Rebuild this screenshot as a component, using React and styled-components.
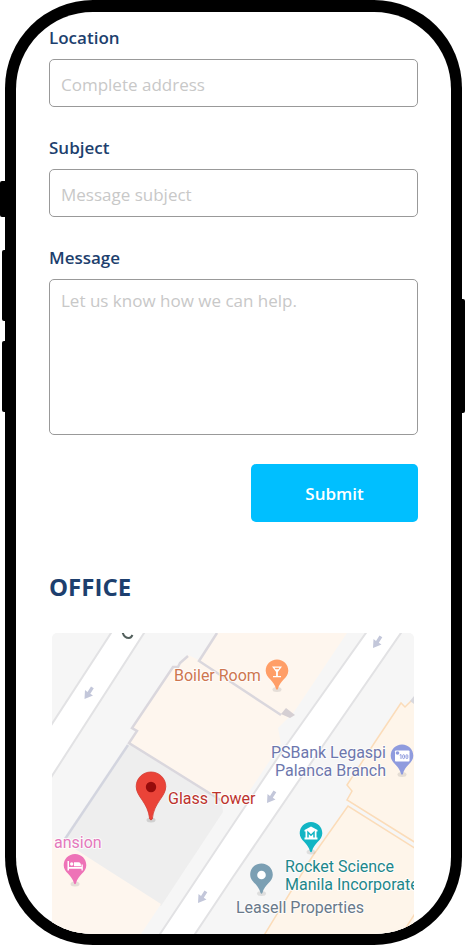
import React from "react";
import styled, { createGlobalStyle } from "styled-components";

const GlobalStyle = createGlobalStyle`
  *, *::before, *::after { box-sizing: border-box; }
  body { margin: 0; background: #fff; }
`;

const navy = "#1d3f6e";

const Stage = styled.div`
  display: flex;
  height: 100vh;
  padding: 0 4px 1px 5px;
  font-family: "Open Sans", sans-serif;
`;

const Device = styled.div`
  position: relative;
  flex: 1;
  display: flex;
  padding: 12px 11px 11px;
  border-radius: 88px;
  background: #000;
`;

const SideKey = styled.span`
  position: absolute;
  top: ${(p) => p.$top}px;
  ${(p) => p.$side}: -${(p) => p.$depth}px;
  width: 8px;
  height: ${(p) => p.$length}px;
  border-radius: 2px;
  background: #000;
`;

const Screen = styled.main`
  position: relative;
  flex: 1;
  min-width: 0;
  overflow: hidden;
  padding: 14px 33px 0;
  border-radius: 77px;
  background: #fff;
`;

const ContactForm = styled.form`
  display: flex;
  flex-direction: column;
  gap: 29px;
`;

const Field = styled.div`
  display: flex;
  flex-direction: column;
  gap: 9px;
`;

const Label = styled.label`
  color: ${navy};
  font-size: 17px;
  font-weight: 600;
  line-height: 24px;
`;

const control = `
  display: block;
  width: 100%;
  margin: 0;
  border: 1px solid #999;
  border-radius: 5px;
  background: #fff;
  color: ${navy};
  font: 400 17px/24px "Open Sans", sans-serif;
  outline-color: #00bfff;
  &::placeholder { color: #c8c8c8; opacity: 1; }
`;

const TextInput = styled.input`
  ${control}
  height: 48px;
  padding: 2px 11px 0;
`;

const TextArea = styled.textarea`
  ${control}
  height: 156px;
  padding: 9px 11px;
  resize: none;
`;

const SubmitButton = styled.button`
  align-self: flex-end;
  width: 167px;
  height: 58px;
  padding: 2px 0 0;
  border: 0;
  border-radius: 5px;
  background: #00bfff;
  color: #fff;
  font: 600 17px/24px "Open Sans", sans-serif;
  cursor: pointer;
`;

const OfficeTitle = styled.h2`
  margin: 49px 0 30px;
  color: ${navy};
  font-size: 24px;
  font-weight: 700;
  line-height: 32px;
`;

const MapFrame = styled.div`
  margin: 0 4px 0 3px;
  overflow: hidden;
  border-radius: 5px;
`;

const MapDrawing = styled.svg`
  display: block;
  width: 100%;
  height: auto;
`;

const PlaceName = styled.text`
  fill: ${(p) => p.$color};
  font-family: Roboto, sans-serif;
  font-size: 16px;
  paint-order: stroke;
  stroke: rgba(255, 255, 255, 0.8);
  stroke-width: 2px;
  stroke-linejoin: round;
`;

function Arrow({ x, y }) {
  return (
    <g transform={`translate(${x} ${y})`} fill="#c3c7da">
      <path d="M0 0 L0.5 -9 L3 -7 L6.5 -12.5 L9.3 -10.7 L5.8 -5.2 L8.5 -3.5 Z" />
    </g>
  );
}

function Pin({ x, y, color, children }) {
  return (
    <g transform={`translate(${x} ${y})`}>
      <ellipse cx="0" cy="18.500" rx="4.500" ry="2.500" fill="#777" opacity=".18" />
      <path
        d="M0 -11.500 C6.500 -11.500 11.300 -6.500 11.300 -.3 C11.300 7 3 9 .9 18 Q0 19.500 -.9 18 C-3 9 -11.300 7 -11.300 -.3 C-11.300 -6.500 -6.500 -11.500 0 -11.500 Z"
        fill={color}
      />
      {children}
    </g>
  );
}

function OfficeMap() {
  return (
    <MapDrawing viewBox="52 633 362 301" role="img" aria-label="Map of the area around Glass Tower">
      <rect x="52" y="633" width="362" height="301" fill="#f6f6f6" />

      {/* roads */}
      <g fill="#fff" stroke="#e2e2e4" strokeWidth="2">
        <path d="M113 630 L50 727 V779 L146 630 Z" />
        <path d="M368 630 L285 747 L230 829 L158 937 H193 L233 877 L313 760 L403 630 Z" />
      </g>
      <path d="M122.500 632 Q124 638 129 638 Q131 638 132.500 635" fill="none" stroke="#53605d" strokeWidth="2" />

      {/* buildings */}
      <path d="M218 633 H347 L294 712 L278 728 L281 744 L240 805 L222 802 L129 743 L137 731 L131 729 L173 666 L178 665 L188 655 L199 660 Z" fill="#fef6ee" />
      <path d="M128 744 L222 802 L223 812 L161 906 L75 849 L64 840 Z" fill="#eee" />
      <path d="M52 838 L75 849 L161 904 L141 934 H52 Z" fill="#fef6ee" />
      <g fill="none" stroke="#dad7dd" strokeWidth="2.500">
        <path d="M217 633 L199 661 L281 715" />
        <path d="M188 656 L180 663 L178 667 L173 667 L132 728 L137 731 L129 743 L222 801" />
        <path d="M128 745 L65 839" stroke="#d3d5df" />
      </g>
      <path d="M286 708 L295 715 L290 718 L281 714 Z" fill="#d5cfd3" />

      <g fill="#fef5ea" stroke="#fbdcb9" strokeWidth="1.500">
        <path d="M416 698 L411 701 L405 707 L401 703 L375 742 L347 785 L352 791 L347 800 L416 843 Z" />
        <path d="M416 849 L348 806 L312 857 L263 937 H416 Z" />
        <path d="M416 912 L400 937" />
      </g>
      <path d="M414 696 L410 701 L414 704 Z" fill="#d8d8de" />

      <Arrow x={84.5} y={699} />
      <Arrow x={373} y={648} />
      <Arrow x={267} y={803} />
      <Arrow x={198} y={903} />

      {/* cocktail bar */}
      <Pin x={277} y={671} color="#ff9e67">
        <path d="M-5 -4.500 H5 L.9 1 V5 H4 V6.200 H-4 V5 H-.9 V1 Z" fill="#fff" />
        <path d="M-2.500 -3.200 H2.500 L1.500 -1.800 H-1.500 Z" fill="#ff9e67" />
      </Pin>

      {/* bank */}
      <Pin x={402} y={756} color="#8f9bde">
        <rect x="-7" y="-5.500" width="14.500" height="11" rx=".8" fill="#fff" />
        <circle cx="-4.500" cy="-3" r="1.800" fill="#8f9bde" />
        <g fill="none" stroke="#8f9bde" strokeWidth="1">
          <path d="M-2.300 -.8 L-1 -1.500 V3" />
          <rect x=".7" y="-1.300" width="1.800" height="3.900" rx=".9" />
          <rect x="4" y="-1.300" width="1.800" height="3.900" rx=".9" />
        </g>
      </Pin>

      {/* museum */}
      <Pin x={311} y={833.5} color="#12b5c4">
        <path d="M0 -7 L6.500 -3.500 V-2 H5.500 V4 H6.500 V6 H-6.500 V4 H-5.500 V-2 H-6.500 V-3.500 Z" fill="#fff" />
        <path d="M-3 4 V-1.300 L0 1.700 L3 -1.300 V4" fill="none" stroke="#12b5c4" strokeWidth="1.500" />
      </Pin>

      {/* unlabelled business */}
      <Pin x={261.5} y={875} color="#7b9fb3">
        <circle r="4.300" fill="#fff" />
      </Pin>

      {/* hotel */}
      <Pin x={75} y={865.5} color="#ee73b7">
        <path d="M-7.500 -4.500 H-6 V1.500 H6.500 V-1 H7.800 V5 H6.500 V3.200 H-6 V5 H-7.500 Z" fill="#fff" />
        <circle cx="-3.300" cy="-1.500" r="1.700" fill="#fff" />
        <path d="M-1 .7 V-3.200 H3.500 Q6 -3 6 .7 Z" fill="#fff" />
      </Pin>

      {/* office */}
      <ellipse cx="151" cy="820" rx="4.500" ry="2.500" fill="#777" opacity=".25" />
      <path d="M151 772 C159.500 772 165.800 778.500 165.800 786.500 C165.800 797 154 802 152.300 819 Q151 821 149.700 819 C148 802 136.200 797 136.200 786.500 C136.200 778.500 142.500 772 151 772 Z" fill="#ea4338" stroke="#d43a31" strokeWidth=".8" />
      <circle cx="151" cy="787" r="5.200" fill="#960b0b" />

      <PlaceName x="174" y="681" $color="#ce764f">Boiler Room</PlaceName>
      <PlaceName x="386" y="758" textAnchor="end" $color="#6d77ad">PSBank Legaspi</PlaceName>
      <PlaceName x="386" y="776" textAnchor="end" $color="#6d77ad">Palanca Branch</PlaceName>
      <PlaceName x="168" y="804" $color="#bd332d">Glass Tower</PlaceName>
      <PlaceName x="54" y="848" $color="#e578bb">ansion</PlaceName>
      <PlaceName x="285" y="872" $color="#1d878b">Rocket Science</PlaceName>
      <PlaceName x="285" y="890" $color="#1d878b">Manila Incorporated</PlaceName>
      <PlaceName x="236" y="913" $color="#69798a">Leasell Properties</PlaceName>
    </MapDrawing>
  );
}

export default function App() {
  return (
    <>
      <GlobalStyle />
      <Stage>
        <Device>
          <SideKey $side="left" $depth={5} $top={181} $length={36} />
          <SideKey $side="left" $depth={3} $top={250} $length={71} />
          <SideKey $side="left" $depth={3} $top={341} $length={71} />
          <SideKey $side="right" $depth={3} $top={299} $length={114} />
          <Screen>
            <ContactForm onSubmit={(e) => e.preventDefault()}>
              <Field>
                <Label htmlFor="location">Location</Label>
                <TextInput id="location" type="text" placeholder="Complete address" />
              </Field>
              <Field>
                <Label htmlFor="subject">Subject</Label>
                <TextInput id="subject" type="text" placeholder="Message subject" />
              </Field>
              <Field>
                <Label htmlFor="message">Message</Label>
                <TextArea id="message" placeholder="Let us know how we can help." />
              </Field>
              <SubmitButton type="submit">Submit</SubmitButton>
            </ContactForm>
            <OfficeTitle>OFFICE</OfficeTitle>
            <MapFrame>
              <OfficeMap />
            </MapFrame>
          </Screen>
        </Device>
      </Stage>
    </>
  );
}
